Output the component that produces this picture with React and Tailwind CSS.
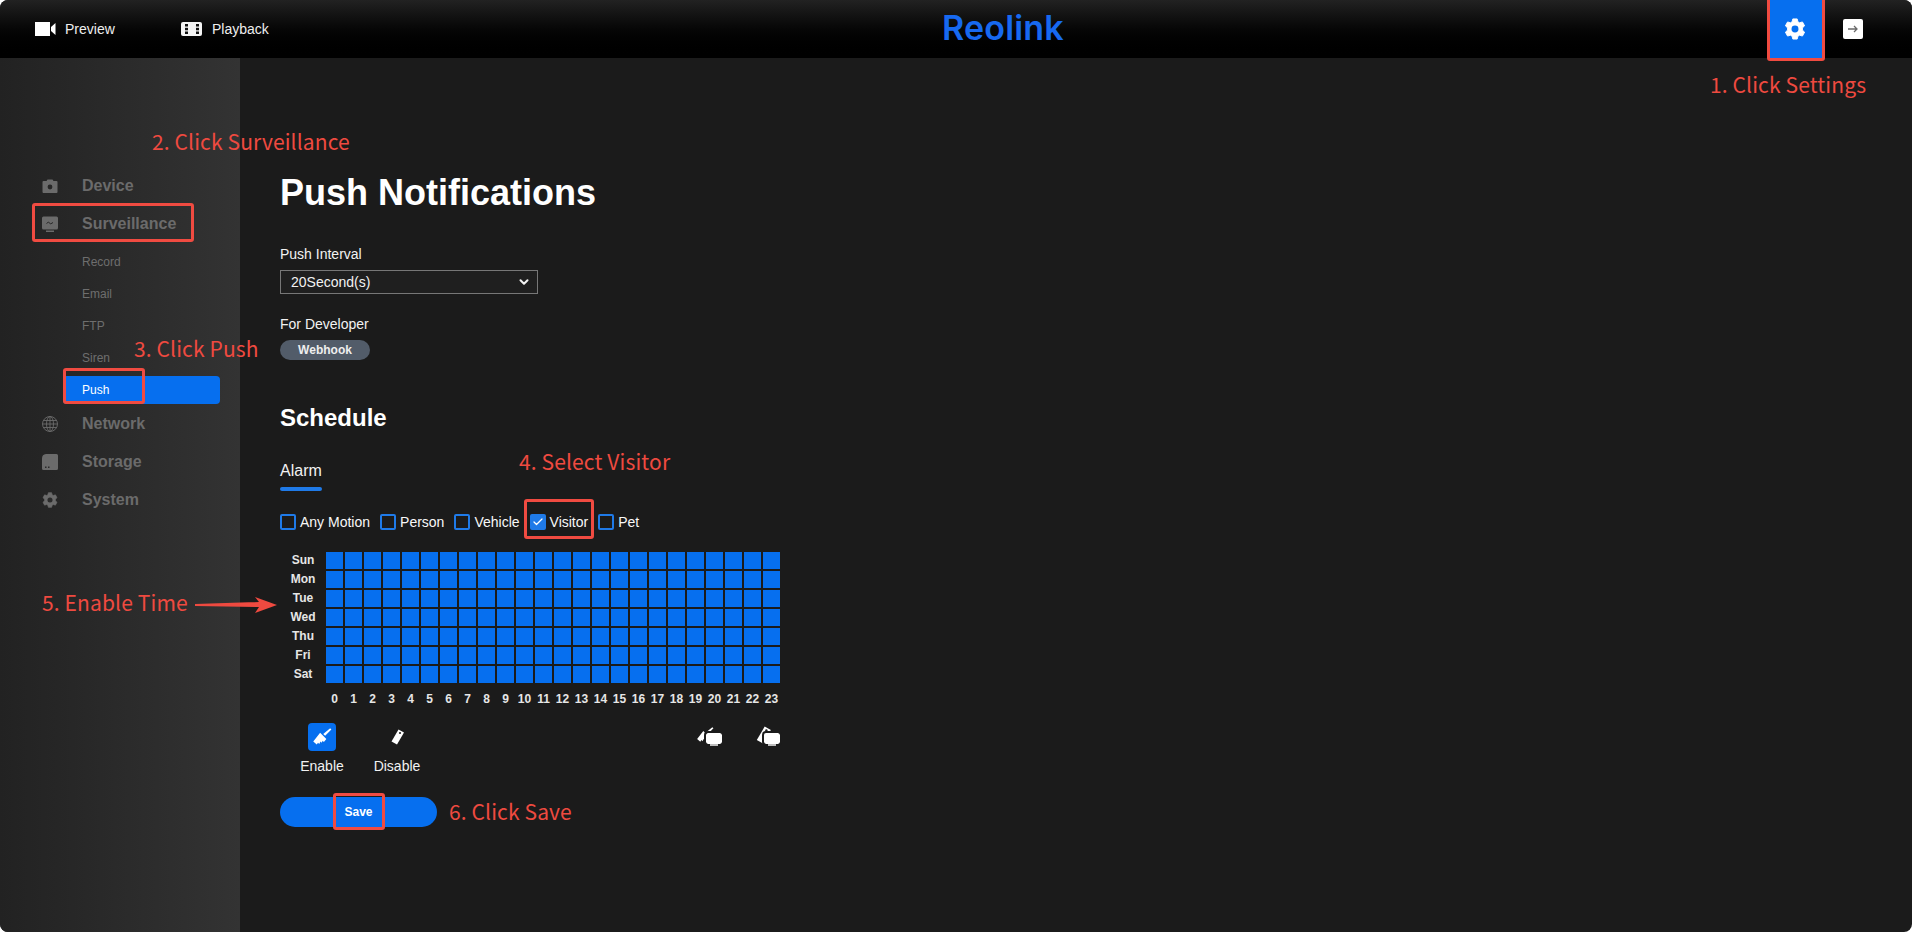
import { ChevronDown, Check } from "lucide-react";

const days = ["Sun", "Mon", "Tue", "Wed", "Thu", "Fri", "Sat"];
const hours = Array.from({ length: 24 }, (_, i) => i);
const subItems = ["Record", "Email", "FTP", "Siren"];

const CameraIcon = () => (
  <svg viewBox="0 0 16 16" className="w-4 h-4" fill="#6b6b6b">
    <path d="M5.500 1.500 4.500 3H1.500a1 1 0 0 0-1 1V14a1 1 0 0 0 1 1h13a1 1 0 0 0 1-1V4a1 1 0 0 0-1-1h-3L10.500 1.500z" />
    <circle cx="8" cy="9" r="2.400" fill="#272727" />
  </svg>
);

const MonitorIcon = () => (
  <svg viewBox="0 0 16 16" className="w-4 h-4" fill="#6b6b6b">
    <rect x="0" y="0.500" width="16" height="13" rx="1.500" />
    <rect x="4" y="14.500" width="8" height="1.500" />
    <path d="M4.500 7.500 6.500 6 8.500 8 11 6.500" fill="none" stroke="#272727" strokeWidth="1" />
  </svg>
);

const GlobeIcon = () => (
  <svg viewBox="0 0 16 16" className="w-4 h-4" fill="none" stroke="#6b6b6b" strokeWidth="0.900">
    <circle cx="8" cy="8" r="7.500" />
    <ellipse cx="8" cy="8" rx="3.500" ry="7.500" />
    <path d="M8 .5v15M.5 8h15M1.500 4.500h13M1.500 11.500h13" />
  </svg>
);

const StorageIcon = () => (
  <svg viewBox="0 0 16 16" className="w-4 h-4" fill="#6b6b6b">
    <path d="M4 0h10.500A1.500 1.500 0 0 1 16 1.500v13a1.500 1.500 0 0 1-1.500 1.500h-13A1.500 1.500 0 0 1 0 14.500V4.500A4.500 4.500 0 0 1 4 0z" />
    <rect x="3" y="12.500" width="1.500" height="1.500" fill="#2a2a2a" />
    <rect x="6" y="12.500" width="1.500" height="1.500" fill="#2a2a2a" />
  </svg>
);

const GearIcon = ({ size, color, hole }) => (
  <svg viewBox="0 0 24 24" width={size} height={size}>
    <path
      fill={color}
      d="M9.600 1h4.800l.8 3.200 1.700 1 3.200-.9 2.400 4.200-2.400 2.300v2.400l2.400 2.300-2.400 4.200-3.200-.9-1.700 1-.8 3.200H9.600l-.8-3.200-1.700-1-3.200.9-2.400-4.200 2.400-2.300v-2.400L1.500 8.500l2.400-4.200 3.200.9 1.700-1z"
      stroke={color}
      strokeWidth="1"
      strokeLinejoin="round"
    />
    <circle cx="12" cy="12" r="3.800" fill={hole} />
  </svg>
);

const VideoIcon = () => (
  <svg viewBox="0 0 21 14" className="w-[21px] h-[14px]" fill="#ffffff">
    <rect width="15" height="14" />
    <path d="M16 5 20.500 1V13L16 9z" />
  </svg>
);

const FilmIcon = () => (
  <svg viewBox="0 0 21 14" className="w-[21px] h-[14px]">
    <rect width="21" height="14" rx="2" fill="#f4f4f4" />
    <rect x="4" y="2" width="3" height="2.500" fill="#111" />
    <rect x="4" y="5.800" width="3" height="2.500" fill="#111" />
    <rect x="4" y="9.500" width="3" height="2.500" fill="#111" />
    <rect x="15" y="2" width="3" height="2.500" fill="#111" />
    <rect x="15" y="5.800" width="3" height="2.500" fill="#111" />
    <rect x="15" y="9.500" width="3" height="2.500" fill="#111" />
  </svg>
);

const BrushIcon = ({ className }) => (
  <svg viewBox="0 0 16 16" className={className} fill="#fff">
    <path d="M14.500 1 9 5.500 10.500 7 15.500 2z" />
    <path d="M6.500 4.500 11.500 9.500 9.500 12 8.500 11 7.800 12.500 6.800 11.500 5.800 13.500 4.800 12.500 3.800 14 1 11.500z" />
  </svg>
);

const EraserIcon = ({ className }) => (
  <svg viewBox="0 0 16 16" className={className}>
    <path fill="#fff" d="M9.500 .5 15 3.500 8 15.500 2.500 12.500z" />
    <circle cx="11" cy="4" r="1.100" fill="#222" />
  </svg>
);

const MonitorBase = () => (
  <div className="absolute right-0 bottom-0 flex flex-col items-center">
    <div className="w-4 h-[11px] rounded-[2px] bg-white outline-2 outline-[#1b1b1b]" />
    <div className="w-2 h-[2px] bg-[#bdbdbd]" />
  </div>
);

const Box = ({ label, checked }) => (
  <label className="flex items-center gap-1 text-[#f8f8f8]">
    {checked ? (
      <span className="w-4 h-4 rounded-[2px] bg-[#1f7ae8] flex items-center justify-center">
        <Check size={12} strokeWidth={2.500} color="#fff" />
      </span>
    ) : (
      <span className="w-4 h-4 rounded-[2px] border-2 border-[#1f7ae8]" />
    )}
    <span>{label}</span>
  </label>
);

const NavItem = ({ icon, label }) => (
  <div className="h-[38px] flex items-center pl-[42px] gap-6 text-base font-bold text-[#6b6b6b]">
    {icon}
    <span>{label}</span>
  </div>
);

const Note = ({ className, children }) => (
  <div
    className={`absolute whitespace-nowrap text-[21px] tracking-[0.13px] leading-7 text-[#ef4a40] font-['Noto_Sans_CJK_SC',sans-serif] ${className}`}
  >
    {children}
  </div>
);

const Mark = ({ className }) => (
  <div className={`absolute border-[3px] border-[#f04b41] rounded-[3px] ${className}`} />
);

export default function App() {
  return (
    <div className="relative w-full h-[932px] overflow-hidden rounded-lg bg-[#1b1b1b] text-white font-['Liberation_Sans',Arial,sans-serif]">
      {/* Top bar */}
      <header className="h-[58px] flex items-center justify-between bg-gradient-to-b from-[#222222] to-[#000000]">
        <nav className="flex items-center text-sm text-[#eeeeee]">
          <div className="flex items-center gap-[9px] pl-[35px] w-[181px]">
            <VideoIcon />
            <span>Preview</span>
          </div>
          <div className="flex items-center gap-[10px]">
            <FilmIcon />
            <span>Playback</span>
          </div>
        </nav>
        <div className="absolute left-[942px] top-[6px] text-[34px] leading-[44px] font-semibold tracking-[0.2px] text-[#1769f0] font-['Inter',sans-serif]">
          Reolink
        </div>
        <div className="flex items-center h-full pr-[49px]">
          <div className="w-[55px] h-full bg-[#066fef] flex items-center justify-center">
            <GearIcon size={22} color="#ffffff" hole="#066fef" />
          </div>
          <div className="ml-[21px] w-5 h-5 rounded-[2px] bg-white flex items-center justify-center">
            <svg viewBox="0 0 12 12" className="w-3 h-3" fill="none" stroke="#6a6a6a" strokeWidth="1.300">
              <path d="M1 6h9M7 3l3 3-3 3" />
            </svg>
          </div>
        </div>
      </header>

      <div className="flex h-[874px]">
        {/* Side menu */}
        <aside className="w-[240px] shrink-0 pt-[109px] bg-gradient-to-r from-[#222222] to-[#333333]">
          <NavItem icon={<CameraIcon />} label="Device" />
          <NavItem icon={<MonitorIcon />} label="Surveillance" />
          <div className="mt-[3px] mb-px text-xs text-[#6e6e6e]">
            {subItems.map((s) => (
              <div key={s} className="h-8 flex items-center pl-[82px]">
                {s}
              </div>
            ))}
            <div className="mt-[2px] ml-[63px] w-[157px] h-7 pl-[19px] flex items-center rounded bg-[#066fef] text-white">
              Push
            </div>
          </div>
          <NavItem icon={<GlobeIcon />} label="Network" />
          <NavItem icon={<StorageIcon />} label="Storage" />
          <NavItem icon={<GearIcon size={16} color="#6b6b6b" hole="#2b2b2b" />} label="System" />
        </aside>

        {/* Content */}
        <main className="pl-10 pt-[113px] text-sm text-[#f2f2f2]">
          <h1 className="text-[36px] leading-11 font-bold text-white">Push Notifications</h1>
          <div className="mt-[29px] leading-5">Push Interval</div>
          <div className="mt-[6px] w-[258px] h-6 pl-[10px] pr-[6px] flex items-center justify-between border border-[#777777] bg-[#1f1f1f]">
            <span>20Second(s)</span>
            <ChevronDown size={14} strokeWidth={3.500} color="#f2f2f2" />
          </div>
          <div className="mt-5 leading-5">For Developer</div>
          <div className="mt-[6px] w-[90px] h-5 rounded-full bg-[#525c69] flex items-center justify-center text-xs font-bold text-[#eeeeee]">
            Webhook
          </div>

          <h2 className="mt-[44px] text-2xl leading-7 font-bold text-white">Schedule</h2>
          <div className="mt-[27px] text-base leading-6 w-[42px]">Alarm</div>
          <div className="mt-[4px] w-[42px] h-1 rounded-full bg-[#1f7ae8]" />

          <div className="mt-[21px] h-5 flex items-center gap-[10px] text-sm">
            <Box label="Any Motion" />
            <Box label="Person" />
            <Box label="Vehicle" />
            <Box label="Visitor" checked />
            <Box label="Pet" />
          </div>

          {/* Time grid */}
          <div className="mt-[20px] flex text-xs font-bold text-[#e6e6e6]">
            <div className="w-[46px] flex flex-col gap-[2px]">
              {days.map((d) => (
                <div key={d} className="h-[17px] pb-[2px] flex items-center justify-center">
                  {d}
                </div>
              ))}
            </div>
            <div className="grid grid-cols-[repeat(24,17px)] grid-rows-[repeat(7,17px)] gap-[2px]">
              {Array.from({ length: 168 }, (_, i) => (
                <div key={i} className="bg-[#066fef]" />
              ))}
            </div>
          </div>
          <div className="mt-[8px] ml-[46px] flex gap-[2px] text-xs font-bold text-[#e6e6e6]">
            {hours.map((h) => (
              <div key={h} className="w-[17px] h-4 flex items-center justify-center">
                {h}
              </div>
            ))}
          </div>

          {/* Paint tools */}
          <div className="mt-[16px] flex items-start">
            <div className="w-[84px] shrink-0 flex flex-col items-center">
              <div className="w-7 h-7 rounded bg-[#066fef] flex items-center justify-center">
                <BrushIcon className="w-5 h-5" />
              </div>
              <div className="mt-[5px] leading-5">Enable</div>
            </div>
            <div className="ml-[-9px] w-[84px] shrink-0 flex flex-col items-center">
              <div className="w-7 h-7 flex items-center justify-center">
                <EraserIcon className="w-4 h-4" />
              </div>
              <div className="mt-[5px] leading-5">Disable</div>
            </div>
            <div className="ml-[257px] mt-[3px] relative shrink-0 w-[26px] h-5">
              <BrushIcon className="absolute left-0 top-0 w-[18px] h-[18px]" />
              <MonitorBase />
            </div>
            <div className="ml-[32px] mt-[3px] relative shrink-0 w-[26px] h-5">
              <EraserIcon className="absolute left-0 top-0 w-[18px] h-[18px]" />
              <MonitorBase />
            </div>
          </div>

          <button className="mt-[21px] w-[157px] h-[30px] rounded-full bg-[#066fef] text-xs font-bold text-white">
            Save
          </button>
        </main>
      </div>

      {/* Tutorial annotations laid over the page */}
      <Mark className="left-[1767px] top-[-3px] w-[58px] h-[64px]" />
      <Mark className="left-[32px] top-[203px] w-[162px] h-[39px]" />
      <Mark className="left-[63px] top-[368px] w-[82px] h-[36px]" />
      <Mark className="left-[524px] top-[499px] w-[70px] h-[40px]" />
      <Mark className="left-[333px] top-[793px] w-[52px] h-[37px]" />
      <Note className="left-[1710px] top-[70px]">1. Click Settings</Note>
      <Note className="left-[152px] top-[127px]">2. Click Surveillance</Note>
      <Note className="left-[134px] top-[334px]">3. Click Push</Note>
      <Note className="left-[519px] top-[447px]">4. Select Visitor</Note>
      <Note className="left-[42px] top-[588px]">5. Enable Time</Note>
      <Note className="left-[449px] top-[797px]">6. Click Save</Note>
      <svg viewBox="0 0 82 16" className="absolute left-[195px] top-[597px] w-[82px] h-4">
        <path d="M0 7 64 5 60 0 82 8 60 16 64 10 0 9z" fill="#ef4a40" />
      </svg>
    </div>
  );
}
